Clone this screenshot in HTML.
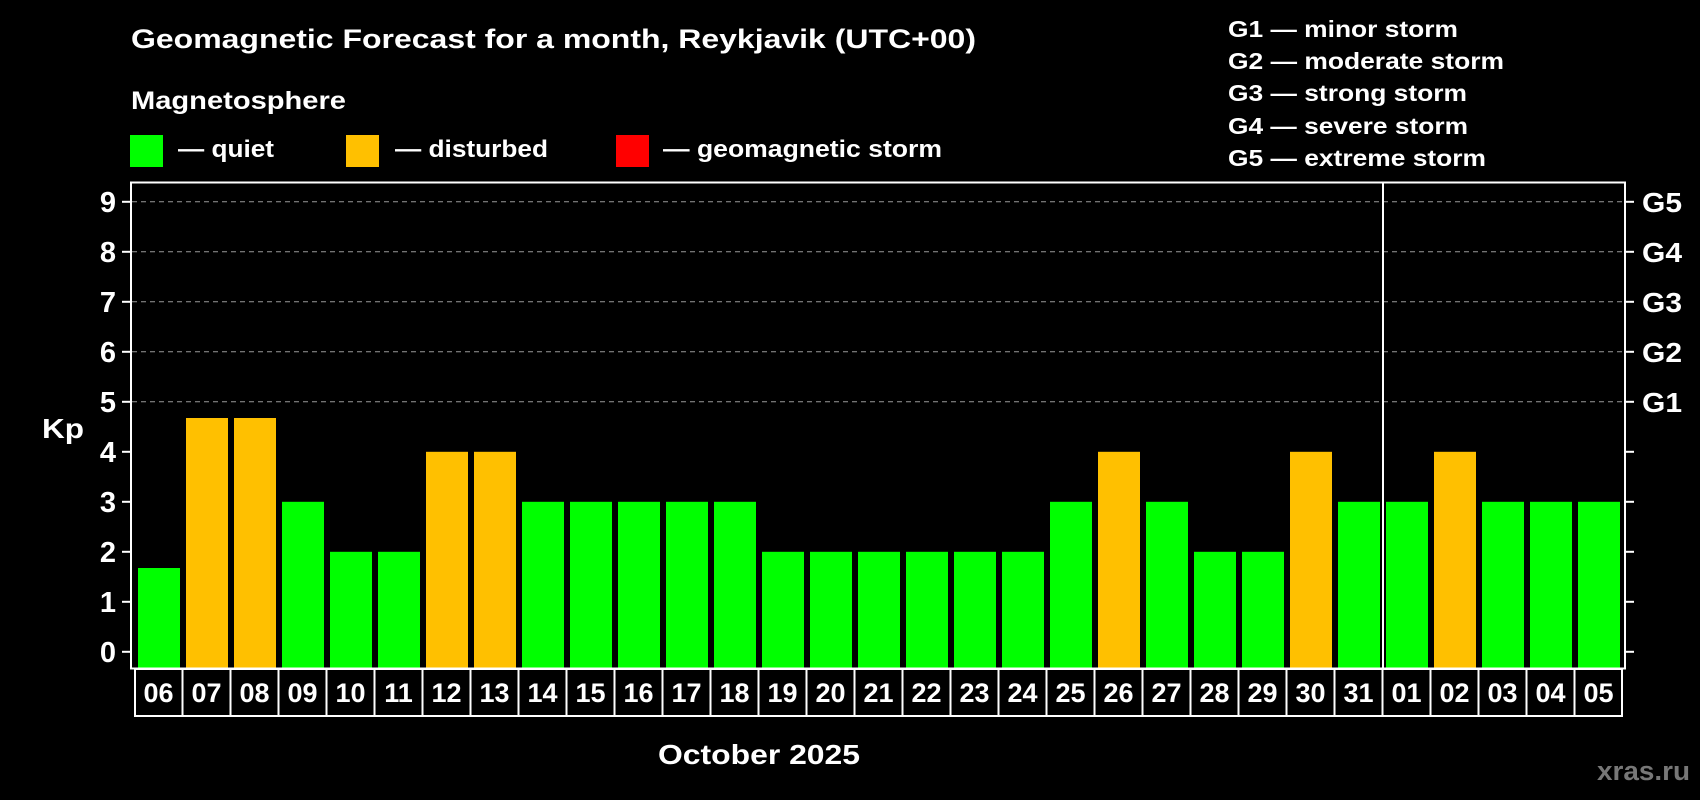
<!DOCTYPE html>
<html><head><meta charset="utf-8"><style>
html,body{margin:0;padding:0;background:#000;width:1700px;height:800px;overflow:hidden}
svg{display:block}
text{font-family:"Liberation Sans",Arial,sans-serif;font-weight:bold;fill:#fff}
</style></head><body>
<svg width="1700" height="800" viewBox="0 0 1700 800">
<rect width="1700" height="800" fill="#000"/>
<text x="131" y="48" font-size="27" textLength="845" lengthAdjust="spacingAndGlyphs">Geomagnetic Forecast for a month, Reykjavik (UTC+00)</text>
<text x="131" y="109" font-size="25" textLength="215" lengthAdjust="spacingAndGlyphs">Magnetosphere</text>
<rect x="130" y="135" width="33" height="32" fill="#00ff00"/>
<text x="178" y="157" font-size="24" textLength="96" lengthAdjust="spacingAndGlyphs">— quiet</text>
<rect x="346" y="135" width="33" height="32" fill="#ffc000"/>
<text x="395" y="157" font-size="24" textLength="153" lengthAdjust="spacingAndGlyphs">— disturbed</text>
<rect x="616" y="135" width="33" height="32" fill="#ff0000"/>
<text x="663" y="157" font-size="24" textLength="279" lengthAdjust="spacingAndGlyphs">— geomagnetic storm</text>
<g font-size="23">
<text x="1228" y="37" textLength="230" lengthAdjust="spacingAndGlyphs">G1 — minor storm</text>
<text x="1228" y="69" textLength="276" lengthAdjust="spacingAndGlyphs">G2 — moderate storm</text>
<text x="1228" y="101" textLength="239" lengthAdjust="spacingAndGlyphs">G3 — strong storm</text>
<text x="1228" y="134" textLength="240" lengthAdjust="spacingAndGlyphs">G4 — severe storm</text>
<text x="1228" y="166" textLength="258" lengthAdjust="spacingAndGlyphs">G5 — extreme storm</text>
</g>
<g stroke="#999" stroke-width="1" stroke-dasharray="5,4">
<line x1="132" y1="201.8" x2="1624" y2="201.8"/>
<line x1="132" y1="251.8" x2="1624" y2="251.8"/>
<line x1="132" y1="301.8" x2="1624" y2="301.8"/>
<line x1="132" y1="351.8" x2="1624" y2="351.8"/>
<line x1="132" y1="401.8" x2="1624" y2="401.8"/>
</g>
<g>
<rect x="138" y="568" width="42" height="100" fill="#00ff00"/>
<rect x="186" y="418" width="42" height="250" fill="#ffc000"/>
<rect x="234" y="418" width="42" height="250" fill="#ffc000"/>
<rect x="282" y="501.8" width="42" height="166.2" fill="#00ff00"/>
<rect x="330" y="551.8" width="42" height="116.2" fill="#00ff00"/>
<rect x="378" y="551.8" width="42" height="116.2" fill="#00ff00"/>
<rect x="426" y="451.8" width="42" height="216.2" fill="#ffc000"/>
<rect x="474" y="451.8" width="42" height="216.2" fill="#ffc000"/>
<rect x="522" y="501.8" width="42" height="166.2" fill="#00ff00"/>
<rect x="570" y="501.8" width="42" height="166.2" fill="#00ff00"/>
<rect x="618" y="501.8" width="42" height="166.2" fill="#00ff00"/>
<rect x="666" y="501.8" width="42" height="166.2" fill="#00ff00"/>
<rect x="714" y="501.8" width="42" height="166.2" fill="#00ff00"/>
<rect x="762" y="551.8" width="42" height="116.2" fill="#00ff00"/>
<rect x="810" y="551.8" width="42" height="116.2" fill="#00ff00"/>
<rect x="858" y="551.8" width="42" height="116.2" fill="#00ff00"/>
<rect x="906" y="551.8" width="42" height="116.2" fill="#00ff00"/>
<rect x="954" y="551.8" width="42" height="116.2" fill="#00ff00"/>
<rect x="1002" y="551.8" width="42" height="116.2" fill="#00ff00"/>
<rect x="1050" y="501.8" width="42" height="166.2" fill="#00ff00"/>
<rect x="1098" y="451.8" width="42" height="216.2" fill="#ffc000"/>
<rect x="1146" y="501.8" width="42" height="166.2" fill="#00ff00"/>
<rect x="1194" y="551.8" width="42" height="116.2" fill="#00ff00"/>
<rect x="1242" y="551.8" width="42" height="116.2" fill="#00ff00"/>
<rect x="1290" y="451.8" width="42" height="216.2" fill="#ffc000"/>
<rect x="1338" y="501.8" width="42" height="166.2" fill="#00ff00"/>
<rect x="1386" y="501.8" width="42" height="166.2" fill="#00ff00"/>
<rect x="1434" y="451.8" width="42" height="216.2" fill="#ffc000"/>
<rect x="1482" y="501.8" width="42" height="166.2" fill="#00ff00"/>
<rect x="1530" y="501.8" width="42" height="166.2" fill="#00ff00"/>
<rect x="1578" y="501.8" width="42" height="166.2" fill="#00ff00"/>
</g>
<rect x="131" y="182.5" width="1494" height="486" fill="none" stroke="#fff" stroke-width="2"/>
<line x1="1383" y1="182.5" x2="1383" y2="668" stroke="#fff" stroke-width="2"/>
<g stroke="#fff" stroke-width="2">
<line x1="122" y1="201.8" x2="130" y2="201.8"/><line x1="1626" y1="201.8" x2="1634" y2="201.8"/>
<line x1="122" y1="251.8" x2="130" y2="251.8"/><line x1="1626" y1="251.8" x2="1634" y2="251.8"/>
<line x1="122" y1="301.8" x2="130" y2="301.8"/><line x1="1626" y1="301.8" x2="1634" y2="301.8"/>
<line x1="122" y1="351.8" x2="130" y2="351.8"/><line x1="1626" y1="351.8" x2="1634" y2="351.8"/>
<line x1="122" y1="401.8" x2="130" y2="401.8"/><line x1="1626" y1="401.8" x2="1634" y2="401.8"/>
<line x1="122" y1="451.8" x2="130" y2="451.8"/><line x1="1626" y1="451.8" x2="1634" y2="451.8"/>
<line x1="122" y1="501.8" x2="130" y2="501.8"/><line x1="1626" y1="501.8" x2="1634" y2="501.8"/>
<line x1="122" y1="551.8" x2="130" y2="551.8"/><line x1="1626" y1="551.8" x2="1634" y2="551.8"/>
<line x1="122" y1="601.8" x2="130" y2="601.8"/><line x1="1626" y1="601.8" x2="1634" y2="601.8"/>
<line x1="122" y1="651.8" x2="130" y2="651.8"/><line x1="1626" y1="651.8" x2="1634" y2="651.8"/>
</g>
<g font-size="29" text-anchor="end">
<text x="116" y="212">9</text><text x="116" y="262">8</text><text x="116" y="312">7</text>
<text x="116" y="362">6</text><text x="116" y="412">5</text><text x="116" y="462">4</text>
<text x="116" y="512">3</text><text x="116" y="562">2</text><text x="116" y="612">1</text>
<text x="116" y="662">0</text>
</g>
<text x="42" y="438" font-size="28" textLength="42" lengthAdjust="spacingAndGlyphs">Kp</text>
<g font-size="28">
<text x="1642" y="212" textLength="40" lengthAdjust="spacingAndGlyphs">G5</text><text x="1642" y="262" textLength="40" lengthAdjust="spacingAndGlyphs">G4</text><text x="1642" y="312" textLength="40" lengthAdjust="spacingAndGlyphs">G3</text>
<text x="1642" y="362" textLength="40" lengthAdjust="spacingAndGlyphs">G2</text><text x="1642" y="412" textLength="40" lengthAdjust="spacingAndGlyphs">G1</text>
</g>
<rect x="135" y="669" width="1487" height="47" fill="none" stroke="#fff" stroke-width="2"/>
<g stroke="#fff" stroke-width="2">
<line x1="182.5" y1="669" x2="182.5" y2="716"/><line x1="230.5" y1="669" x2="230.5" y2="716"/>
<line x1="278.5" y1="669" x2="278.5" y2="716"/><line x1="326.5" y1="669" x2="326.5" y2="716"/>
<line x1="374.5" y1="669" x2="374.5" y2="716"/><line x1="422.5" y1="669" x2="422.5" y2="716"/>
<line x1="470.5" y1="669" x2="470.5" y2="716"/><line x1="518.5" y1="669" x2="518.5" y2="716"/>
<line x1="566.5" y1="669" x2="566.5" y2="716"/><line x1="614.5" y1="669" x2="614.5" y2="716"/>
<line x1="662.5" y1="669" x2="662.5" y2="716"/><line x1="710.5" y1="669" x2="710.5" y2="716"/>
<line x1="758.5" y1="669" x2="758.5" y2="716"/><line x1="806.5" y1="669" x2="806.5" y2="716"/>
<line x1="854.5" y1="669" x2="854.5" y2="716"/><line x1="902.5" y1="669" x2="902.5" y2="716"/>
<line x1="950.5" y1="669" x2="950.5" y2="716"/><line x1="998.5" y1="669" x2="998.5" y2="716"/>
<line x1="1046.5" y1="669" x2="1046.5" y2="716"/><line x1="1094.5" y1="669" x2="1094.5" y2="716"/>
<line x1="1142.5" y1="669" x2="1142.5" y2="716"/><line x1="1190.5" y1="669" x2="1190.5" y2="716"/>
<line x1="1238.5" y1="669" x2="1238.5" y2="716"/><line x1="1286.5" y1="669" x2="1286.5" y2="716"/>
<line x1="1334.5" y1="669" x2="1334.5" y2="716"/><line x1="1382.5" y1="669" x2="1382.5" y2="716"/>
<line x1="1430.5" y1="669" x2="1430.5" y2="716"/><line x1="1478.5" y1="669" x2="1478.5" y2="716"/>
<line x1="1526.5" y1="669" x2="1526.5" y2="716"/><line x1="1574.5" y1="669" x2="1574.5" y2="716"/>
</g>
<g font-size="27" text-anchor="middle">
<text x="158.5" y="702">06</text><text x="206.5" y="702">07</text><text x="254.5" y="702">08</text>
<text x="302.5" y="702">09</text><text x="350.5" y="702">10</text><text x="398.5" y="702">11</text>
<text x="446.5" y="702">12</text><text x="494.5" y="702">13</text><text x="542.5" y="702">14</text>
<text x="590.5" y="702">15</text><text x="638.5" y="702">16</text><text x="686.5" y="702">17</text>
<text x="734.5" y="702">18</text><text x="782.5" y="702">19</text><text x="830.5" y="702">20</text>
<text x="878.5" y="702">21</text><text x="926.5" y="702">22</text><text x="974.5" y="702">23</text>
<text x="1022.5" y="702">24</text><text x="1070.5" y="702">25</text><text x="1118.5" y="702">26</text>
<text x="1166.5" y="702">27</text><text x="1214.5" y="702">28</text><text x="1262.5" y="702">29</text>
<text x="1310.5" y="702">30</text><text x="1358.5" y="702">31</text><text x="1406.5" y="702">01</text>
<text x="1454.5" y="702">02</text><text x="1502.5" y="702">03</text><text x="1550.5" y="702">04</text>
<text x="1598.5" y="702">05</text>
</g>
<text x="658" y="764" font-size="28" textLength="202" lengthAdjust="spacingAndGlyphs">October 2025</text>
<text x="1597" y="780" font-size="27" textLength="93" lengthAdjust="spacingAndGlyphs" style="fill:#777">xras.ru</text>
</svg>
</body></html>
